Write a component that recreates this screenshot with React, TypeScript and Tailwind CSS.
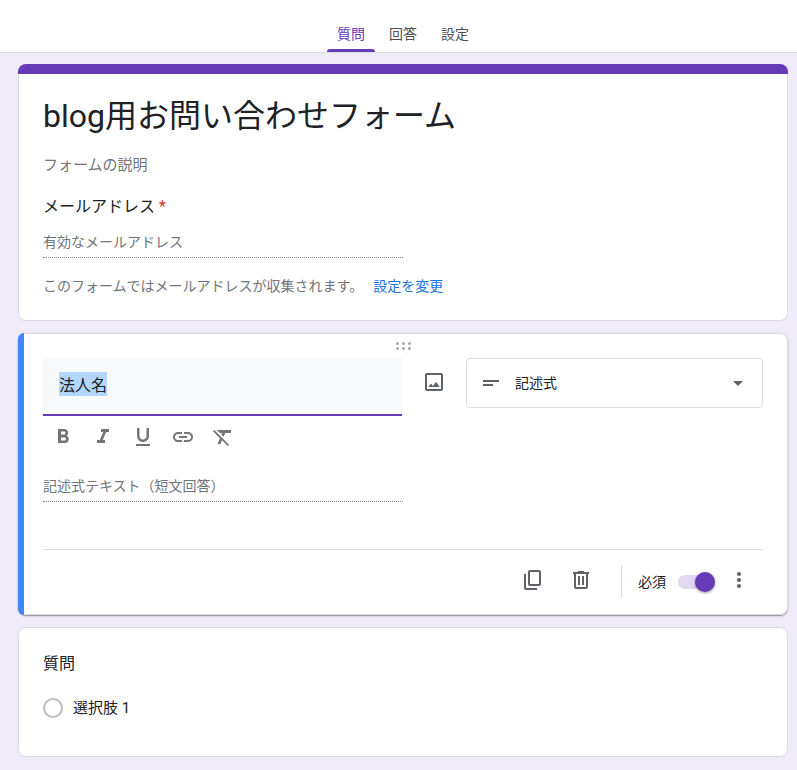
import { useEffect, useRef, useState } from 'react';
import {
  MdArrowDropDown,
  MdFormatBold,
  MdFormatClear,
  MdFormatItalic,
  MdFormatUnderlined,
  MdLink,
  MdMoreVert,
} from 'react-icons/md';

const tabs = ['質問', '回答', '設定'];

const formatActions = [
  { label: '太字', Icon: MdFormatBold },
  { label: '斜体', Icon: MdFormatItalic },
  { label: '下線', Icon: MdFormatUnderlined },
  { label: 'リンクを挿入', Icon: MdLink },
  { label: '書式をクリア', Icon: MdFormatClear },
];

function ImageIcon() {
  return (
    <svg viewBox="0 0 24 24" className="size-6" fill="none">
      <rect x="4" y="4" width="16" height="16" rx="1" stroke="currentColor" strokeWidth="2" />
      <path d="M6.3 17L8.8 13.6 11 16l3-4.2 3.7 5.2z" fill="currentColor" />
    </svg>
  );
}

function CopyIcon() {
  return (
    <svg viewBox="0 0 24 24" className="size-6" fill="none" stroke="currentColor" strokeWidth="2">
      <rect x="8" y="3" width="11" height="14" rx="1" />
      <path d="M4 6v14a1 1 0 0 0 1 1h11" />
    </svg>
  );
}

function TrashIcon() {
  return (
    <svg viewBox="0 0 24 24" className="size-6" fill="none" stroke="currentColor" strokeWidth="2">
      <path d="M4 5h16M9 4h6M6 5v14a1 1 0 0 0 1 1h10a1 1 0 0 0 1-1V5M10 8v9M14 8v9" />
    </svg>
  );
}

function DragHandle() {
  return (
    <svg viewBox="0 0 15 8" className="h-2 w-[15px]" fill="#a6a6a6">
      {[1.5, 7.5, 13.5].map((x) => (
        <g key={x}>
          <circle cx={x} cy="1.5" r="1.5" />
          <circle cx={x} cy="6.5" r="1.5" />
        </g>
      ))}
    </svg>
  );
}

function TabBar() {
  const [active, setActive] = useState(tabs[0]);

  return (
    <nav className="flex h-[53px] items-end justify-center gap-1 border-b border-[#dadce0] bg-white pr-[9px] pl-[18px]">
      {tabs.map((tab) => (
        <button
          key={tab}
          type="button"
          onClick={() => setActive(tab)}
          className={
            tab === active
              ? 'flex w-12 flex-col items-center text-sm text-[#673ab7]'
              : 'flex w-12 flex-col items-center text-sm text-[#4d5156]'
          }
        >
          <span className="pb-[5px]">{tab}</span>
          <span className={tab === active ? 'h-[3px] w-full rounded-t-[3px] bg-[#673ab7]' : 'h-[3px] w-full'} />
        </button>
      ))}
    </nav>
  );
}

function HeaderCard() {
  return (
    <section>
      <div className="h-2.5 rounded-t-lg bg-[#673ab7]" />
      <div className="rounded-b-lg border border-t-0 border-[#dadce0] bg-white px-6 pt-[18px] pb-6">
        <input
          aria-label="フォームのタイトル"
          defaultValue="blog用お問い合わせフォーム"
          className="block h-12 w-full text-[32px] text-[#202124] outline-none"
        />
        <input
          aria-label="フォームの説明"
          placeholder="フォームの説明"
          className="mt-[13px] block h-6 w-full text-[15px] outline-none placeholder:text-[#70757a]"
        />
        <label htmlFor="email" className="mt-[18px] block text-base leading-6">
          メールアドレス <span className="text-[#d93025]">*</span>
        </label>
        <input
          id="email"
          type="email"
          placeholder="有効なメールアドレス"
          className="mt-[11px] block h-7 w-1/2 border-b border-dotted border-[#80868b] pb-1 text-sm outline-none placeholder:text-[#70757a]"
        />
        <p className="mt-[18px] text-sm text-[#70757a]">
          このフォームではメールアドレスが収集されます。
          <a href="#settings" className="ml-2.5 text-[#1a73e8]">設定を変更</a>
        </p>
      </div>
    </section>
  );
}

function QuestionEditor() {
  const titleRef = useRef<HTMLInputElement>(null);

  useEffect(() => {
    titleRef.current?.focus();
    titleRef.current?.select();
  }, []);

  return (
    <section className="flex rounded-lg shadow-[0_1px_1px_rgba(0,0,0,0.3),0_1px_3px_rgba(0,0,0,0.14)]">
      <div className="w-1.5 shrink-0 rounded-l-lg bg-[#4285f4]" />
      <div className="min-w-0 flex-1 rounded-r-lg border border-l-0 border-[#dadce0] bg-white pr-6 pl-[19px]">
        <div className="flex h-6 items-center justify-center">
          <DragHandle />
        </div>

        <div className="flex items-start">
          <input
            ref={titleRef}
            aria-label="質問のタイトル"
            defaultValue="法人名"
            className="h-[58px] min-w-0 flex-1 border-b-2 border-[#673ab7] bg-[#f8f9fa] px-4 pb-1 text-base text-[#202124] outline-none selection:bg-[#b3d7ff] selection:text-[#202124]"
          />
          <button type="button" aria-label="画像を追加" className="mx-2 flex size-12 items-center justify-center text-[#5f6368]">
            <ImageIcon />
          </button>
          <div className="relative w-[297px] shrink-0">
            <select
              aria-label="質問の形式"
              className="block h-[50px] w-full appearance-none rounded border border-[#dadce0] bg-white pl-12 text-sm text-[#202124]"
            >
              <option>記述式</option>
              <option>段落</option>
              <option>ラジオボタン</option>
            </select>
            <svg viewBox="0 0 24 24" className="pointer-events-none absolute inset-y-0 left-[13px] my-auto size-6" fill="#5f6368">
              <path d="M4 9h16v2H4zM4 13h10v2H4z" />
            </svg>
            <MdArrowDropDown className="pointer-events-none absolute inset-y-0 right-[13px] my-auto size-6 text-[#5f6368]" />
          </div>
        </div>

        <div className="mt-px flex">
          {formatActions.map(({ label, Icon }) => (
            <button key={label} type="button" aria-label={label} className="flex size-10 items-center justify-center text-[#757575]">
              <Icon className="size-6" />
            </button>
          ))}
        </div>

        <input
          aria-label="記述式テキスト"
          placeholder="記述式テキスト（短文回答）"
          className="mt-[17px] block h-7 w-1/2 border-b border-dotted border-[#80868b] pb-1 text-sm outline-none placeholder:text-[#70757a]"
        />

        <div className="mt-[47px] flex h-[65px] items-center justify-end border-t border-[#dadce0] text-[#5f6368]">
          <button type="button" aria-label="コピーを作成" className="flex size-12 items-center justify-center pb-1">
            <CopyIcon />
          </button>
          <button type="button" aria-label="削除" className="flex size-12 items-center justify-center pb-1">
            <TrashIcon />
          </button>
          <div className="ml-4 h-8 w-px bg-[#dadce0]" />
          <label className="ml-4 flex items-center gap-3 text-sm text-[#202124]">
            必須
            <input
              type="checkbox"
              role="switch"
              defaultChecked
              className="relative h-3.5 w-[37px] appearance-none rounded-full bg-[#bdbdbd] before:absolute before:-top-[3px] before:-left-px before:size-5 before:rounded-full before:bg-white before:shadow-[0_1px_3px_rgba(0,0,0,0.4)] checked:bg-[#e1d8f1] checked:before:left-[17px] checked:before:bg-[#673ab7]"
            />
          </label>
          <button type="button" aria-label="その他のオプション" className="flex size-12 items-center justify-center pb-1">
            <MdMoreVert className="size-6" />
          </button>
        </div>
      </div>
    </section>
  );
}

function ChoiceCard() {
  return (
    <section className="rounded-lg border border-[#dadce0] bg-white px-6 pt-6 pb-[38px]">
      <h2 className="text-base leading-6">質問</h2>
      <label className="mt-[22px] flex items-center gap-2.5 text-[15px] leading-5">
        <input type="radio" name="choice" className="size-5 appearance-none rounded-full border-2 border-[#bdbdbd]" />
        選択肢 1
      </label>
    </section>
  );
}

export default function App() {
  return (
    <div className="min-h-screen bg-[#f0ebf8] font-[Roboto,'Noto_Sans_CJK_JP',sans-serif] text-[#202124]" lang="ja">
      <TabBar />
      <main className="flex flex-col gap-3 pt-[11px] pr-[9px] pb-3 pl-[18px]">
        <HeaderCard />
        <QuestionEditor />
        <ChoiceCard />
      </main>
    </div>
  );
}
